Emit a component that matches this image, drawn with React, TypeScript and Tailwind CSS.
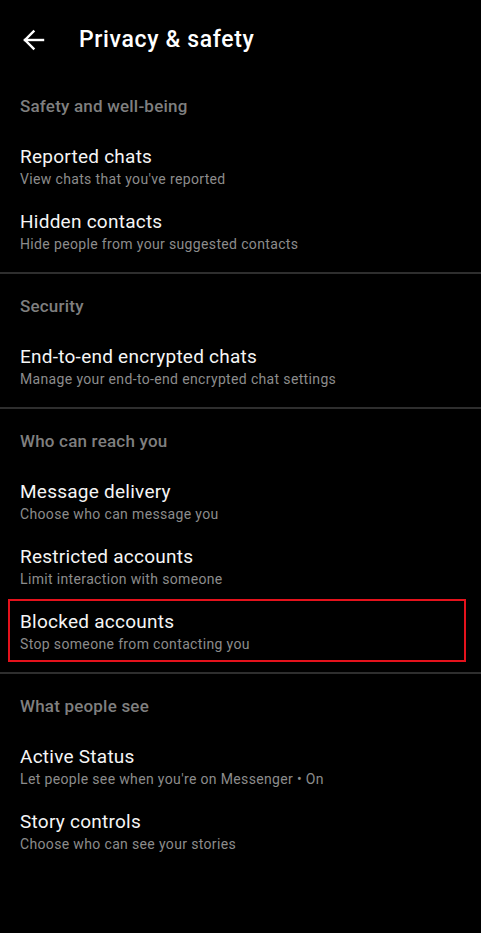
import React from 'react';

type Item = { title: string; subtitle: string; highlight?: boolean };
type Section = { heading: string; items: Item[] };

const SECTIONS: Section[] = [
  {
    heading: 'Safety and well-being',
    items: [
      { title: 'Reported chats', subtitle: "View chats that you've reported" },
      { title: 'Hidden contacts', subtitle: 'Hide people from your suggested contacts' },
    ],
  },
  {
    heading: 'Security',
    items: [
      { title: 'End-to-end encrypted chats', subtitle: 'Manage your end-to-end encrypted chat settings' },
    ],
  },
  {
    heading: 'Who can reach you',
    items: [
      { title: 'Message delivery', subtitle: 'Choose who can message you' },
      { title: 'Restricted accounts', subtitle: 'Limit interaction with someone' },
      { title: 'Blocked accounts', subtitle: 'Stop someone from contacting you', highlight: true },
    ],
  },
  {
    heading: 'What people see',
    items: [
      { title: 'Active Status', subtitle: "Let people see when you're on Messenger • On" },
      { title: 'Story controls', subtitle: 'Choose who can see your stories' },
    ],
  },
];

const Row: React.FC<{ item: Item }> = ({ item }) => (
  <div className="relative h-[65px] px-5 pt-[11px] flex flex-col">
    <span className="text-[19px] leading-[24px] tracking-[0.25px] text-[#f5f5f5]">{item.title}</span>
    <span className="text-[14px] leading-[20px] tracking-[0.35px] text-[#8c8c8c]">{item.subtitle}</span>
    {item.highlight && (
      <span className="absolute left-2 right-[15px] top-0 bottom-[2px] border-2 border-[#e5121c] pointer-events-none" />
    )}
  </div>
);

export default function App() {
  return (
    <div
      className="w-[481px] h-[933px] bg-black overflow-hidden"
      style={{ fontFamily: 'Roboto, "Noto Sans", sans-serif' }}
    >
      <div className="h-[80px] flex items-center px-[22px] gap-[33px]">
        <svg width="24" height="24" viewBox="0 0 24 24" fill="none" stroke="#ffffff" strokeWidth="2.4" strokeLinecap="square">
          <path d="M3 12h18" />
          <path d="M11.5 3.5L3 12l8.5 8.5" />
        </svg>
        <h1 className="text-[23px] font-medium text-white tracking-[0.65px]">Privacy &amp; safety</h1>
      </div>

      {SECTIONS.map((section, i) => (
        <div key={section.heading}>
          {i > 0 && <div className="h-[2px] bg-[#2e2e2e]" />}
          <div className={`${i > 0 ? 'pt-[6px]' : ''} pb-[8px]`}>
            <div className="h-[54px] flex items-center px-5">
              <span className="text-[17px] font-medium tracking-[0.2px] text-[#7f7f7f]">{section.heading}</span>
            </div>
            {section.items.map(item => (
              <Row key={item.title} item={item} />
            ))}
          </div>
        </div>
      ))}
    </div>
  );
}
